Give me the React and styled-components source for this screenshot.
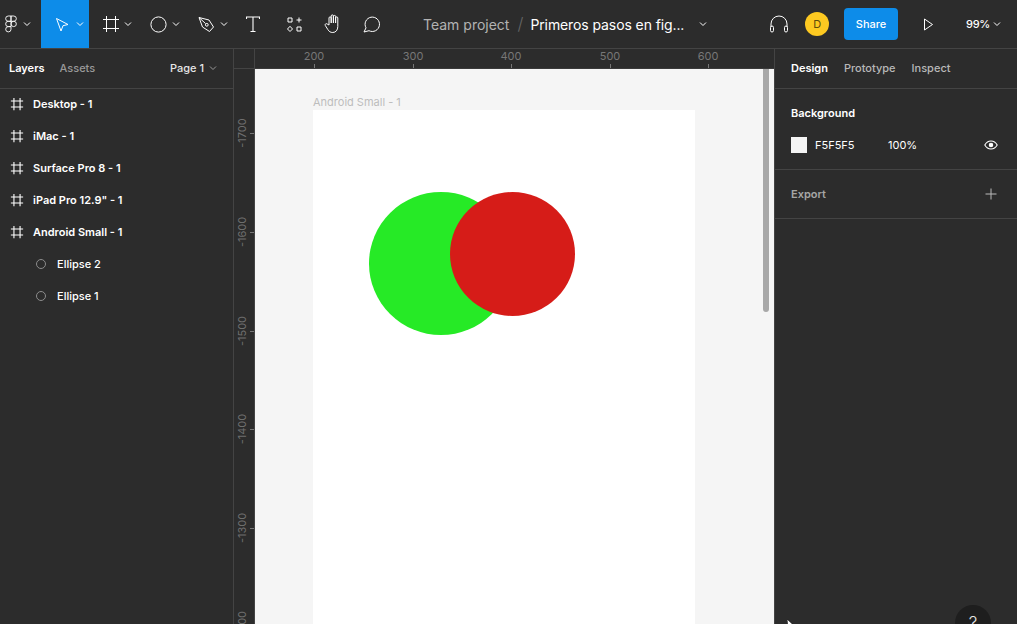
import React from 'react';
import styled, { createGlobalStyle } from 'styled-components';

const layers = ['Desktop - 1', 'iMac - 1', 'Surface Pro 8 - 1', 'iPad Pro 12.9" - 1', 'Android Small - 1'];
const shapes = ['Ellipse 2', 'Ellipse 1'];
const hTicks = [
  { label: '200', x: 59 },
  { label: '300', x: 158 },
  { label: '400', x: 256 },
  { label: '500', x: 355 },
  { label: '600', x: 453 },
];
const vTicks = [
  { label: '-1700', y: 64 },
  { label: '-1600', y: 163 },
  { label: '-1500', y: 262 },
  { label: '-1400', y: 360 },
  { label: '-1300', y: 459 },
  { label: '-1200', y: 557 },
];

const Chevron = ({ color = '#fff' }) => (
  <svg width='8' height='6' viewBox='0 0 8 6' fill='none' stroke={color} strokeWidth='1'>
    <path d='M1 1.5l3 3 3-3' />
  </svg>
);

const FrameIcon = ({ size = 14 }) => (
  <svg width={size} height={size} viewBox='0 0 16 16' fill='none' stroke='#fff' strokeWidth='1.25'>
    <path d='M4.5 1v14M11.5 1v14M1 4.5h14M1 11.5h14' />
  </svg>
);

const App = () => (
  <Page>
    <GlobalStyle />
    <Toolbar>
      <ToolGroup>
        <LogoTool>
          <svg width='14' height='18' viewBox='0 0 14 18' fill='none' stroke='#fff' strokeWidth='0.9'>
            <path d='M7 1H4.300a2.650 2.650 0 0 0 0 5.300H7zM7 1h2.700a2.650 2.650 0 0 1 0 5.300H7zM7 6.300H4.300a2.650 2.650 0 0 0 0 5.300H7zM7 11.600H4.300A2.650 2.650 0 1 0 7 14.250z' />
            <circle cx='9.700' cy='8.950' r='2.650' />
          </svg>
          <Chevron />
        </LogoTool>
        <MoveTool>
          <svg width='14' height='15' viewBox='0 0 14 15' fill='none' stroke='#fff' strokeWidth='1'>
            <path d='M1.500 1.500l11.500 6-5 1.200-2 5.300z' />
          </svg>
          <Chevron />
        </MoveTool>
        <Tool $gap={4}>
          <svg width='18' height='18' viewBox='0 0 18 18' fill='none' stroke='#fff' strokeWidth='1'>
            <path d='M4.500 1v16M13.500 1v16M1 4.500h16M1 13.500h16' />
          </svg>
          <Chevron />
        </Tool>
        <Tool>
          <svg width='17' height='17' viewBox='0 0 17 17' fill='none' stroke='#fff' strokeWidth='1'>
            <circle cx='8.500' cy='8.500' r='7.600' />
          </svg>
          <Chevron />
        </Tool>
        <Tool>
          <svg width='17' height='17' viewBox='0 0 17 17' fill='none' stroke='#fff' strokeWidth='1'>
            <path d='M1 1.500l10 2.500 4.500 7-4 4.500-7-4.500zM1 1.500l6.500 6' />
            <circle cx='8.800' cy='8.800' r='1.400' />
          </svg>
          <Chevron />
        </Tool>
        <SoloTool $w={54}>
          <svg width='14' height='16' viewBox='0 0 14 16' fill='none' stroke='#fff' strokeWidth='1.100'>
            <path d='M.5 3V1h13v2M7 1v14M4.500 15.500h5' />
          </svg>
        </SoloTool>
        <SoloTool $w={37} $flush>
          <svg width='15' height='15' viewBox='0 0 15 15' fill='none' stroke='#fff' strokeWidth='1'>
            <path d='M1 1h4v4H1zM10 10h4v4h-4zM3 9.300L5.500 12 3 14.500.5 12zM12 .5v5M9.500 3h5' />
          </svg>
        </SoloTool>
        <SoloTool $w={39} $flush>
          <svg width='18' height='20' viewBox='0 0 18 20' fill='none' stroke='#fff' strokeWidth='1'>
            <path d='M5 11V4a1.100 1.100 0 0 1 2.200 0v5-7a1.100 1.100 0 0 1 2.200 0v7-6.500a1.100 1.100 0 0 1 2.200 0V9 4a1.100 1.100 0 0 1 2.200 0v8.500c0 3.500-2 6-5 6-2.500 0-3.700-1-5-3L1.300 11.500c-.8-1.300 1-2.500 2-1.400z' />
          </svg>
        </SoloTool>
        <SoloTool $w={24} $flush>
          <svg width='18' height='18' viewBox='0 0 18 18' fill='none' stroke='#fff' strokeWidth='1'>
            <path d='M1 17l2-4.200A7.200 7.200 0 1 1 6 15.700z' />
          </svg>
        </SoloTool>
      </ToolGroup>

      <FileTitle>
        <Project>Team project</Project>
        <Slash>/</Slash>
        <FileName>Primeros pasos en fig...</FileName>
        <Chevron />
      </FileTitle>

      <Actions>
        <svg width='20' height='18' viewBox='0 0 20 18' fill='none' stroke='#fff' strokeWidth='1'>
          <path d='M2 12V9a8 8 0 0 1 16 0v3' />
          <rect x='1.500' y='11' width='3' height='6' rx='1.500' />
          <rect x='15.500' y='11' width='3' height='6' rx='1.500' />
        </svg>
        <Avatar>D</Avatar>
        <ShareButton>Share</ShareButton>
        <svg width='11' height='13' viewBox='0 0 11 13' fill='none' stroke='#fff' strokeWidth='1'>
          <path d='M1.500 1v11l8-5.500z' />
        </svg>
        <Zoom>
          99%
          <Chevron />
        </Zoom>
      </Actions>
    </Toolbar>

    <Workspace>
      <LeftPanel>
        <PanelTabs>
          <TabRow>
            <Tab $active>Layers</Tab>
            <Tab>Assets</Tab>
          </TabRow>
          <PagePicker>
            Page 1
            <Chevron color='#999' />
          </PagePicker>
        </PanelTabs>
        <LayerList>
          {layers.map(name => (
            <LayerRow key={name}>
              <FrameIcon />
              <LayerName>{name}</LayerName>
            </LayerRow>
          ))}
          {shapes.map(name => (
            <ShapeRow key={name}>
              <ShapeDot />
              <ShapeName>{name}</ShapeName>
            </ShapeRow>
          ))}
        </LayerList>
      </LeftPanel>

      <Stage>
        <Corner />
        <TopRuler>
          {hTicks.map(t => (
            <HTick key={t.label} style={{ left: t.x }}>{t.label}</HTick>
          ))}
        </TopRuler>
        <SideRuler>
          {vTicks.map(t => (
            <VTick key={t.label} style={{ top: t.y }}>
              <span>{t.label}</span>
            </VTick>
          ))}
        </SideRuler>
        <Canvas>
          <FrameLabel>Android Small - 1</FrameLabel>
          <Frame>
            <GreenCircle />
            <RedCircle />
          </Frame>
          <Scrollbar />
        </Canvas>
      </Stage>

      <RightPanel>
        <DesignTabs>
          <DesignTabRow>
            <Tab $active>Design</Tab>
            <Tab $soft>Prototype</Tab>
            <Tab $soft>Inspect</Tab>
          </DesignTabRow>
        </DesignTabs>
        <BackgroundSection>
          <SectionTitle>Background</SectionTitle>
          <FillRow>
            <Swatch />
            <FillHex>F5F5F5</FillHex>
            <FillOpacity>100%</FillOpacity>
            <EyeSlot>
              <svg width='14' height='10' viewBox='0 0 14 10' fill='none' stroke='#fff' strokeWidth='1.100'>
                <path d='M.8 5C2.300 2.300 4.500 1 7 1s4.700 1.300 6.200 4C11.700 7.700 9.500 9 7 9S2.300 7.700.8 5z' />
                <circle cx='7' cy='5' r='1.700' fill='#fff' />
              </svg>
            </EyeSlot>
          </FillRow>
        </BackgroundSection>
        <ExportSection>
          <ExportTitle>Export</ExportTitle>
          <svg width='12' height='12' viewBox='0 0 12 12' fill='none' stroke='#bbb' strokeWidth='1'>
            <path d='M6 .5v11M.5 6h11' />
          </svg>
        </ExportSection>
        <HelpButton>?</HelpButton>
        <Cursor>
          <svg width='8' height='10' viewBox='0 0 8 10'>
            <path d='M0 0l7 6.500H3.500L1 10z' fill='#fff' stroke='#000' strokeWidth='.6' />
          </svg>
        </Cursor>
      </RightPanel>
    </Workspace>
  </Page>
);

export default App;

const GlobalStyle = createGlobalStyle`
  html, body {
    margin: 0;
    height: 100%;
    overflow: hidden;
    background: #2c2c2c;
  }
`;

const Page = styled.div`
  width: 1017px;
  height: 624px;
  display: flex;
  flex-direction: column;
  overflow: hidden;
  background: #2c2c2c;
  color: #fff;
  font-family: Inter, 'Liberation Sans', sans-serif;
  font-size: 11px;
`;

const Toolbar = styled.header`
  flex: 0 0 49px;
  box-sizing: border-box;
  display: grid;
  grid-template-columns: 400px 1fr auto;
  align-items: center;
  border-bottom: 1px solid #444;
`;

const ToolGroup = styled.div`
  display: flex;
  align-items: center;
  height: 48px;
`;

const Tool = styled.div`
  width: 48px;
  height: 48px;
  box-sizing: border-box;
  padding-left: 13px;
  display: flex;
  align-items: center;
  gap: ${p => p.$gap || 5}px;
  flex-shrink: 0;
`;

const LogoTool = styled(Tool)`
  width: 41px;
  padding-left: 4px;
`;

const MoveTool = styled(Tool)`
  background: #0d8ce9;
  padding-left: 14px;
  gap: 7px;
`;

const SoloTool = styled(Tool)`
  width: ${p => p.$w}px;
  padding-left: ${p => (p.$flush ? 0 : 13)}px;
`;

const FileTitle = styled.div`
  display: flex;
  align-items: center;
  padding-left: 23px;
  font-size: 14px;
  white-space: nowrap;
`;

const Project = styled.span`
  color: #b3b3b3;
`;

const Slash = styled.span`
  margin: 0 7px 0 8px;
  color: #666;
  font-size: 17px;
  font-weight: 300;
`;

const FileName = styled.span`
  color: #fff;
  margin-right: 15px;
  letter-spacing: -0.1px;
`;

const Actions = styled.div`
  display: flex;
  align-items: center;
  padding-right: 16px;
`;

const Avatar = styled.div`
  width: 24px;
  height: 24px;
  margin: 0 15px 0 16px;
  border-radius: 50%;
  background: #fdc921;
  color: #5f4b0c;
  font-size: 11px;
  display: flex;
  align-items: center;
  justify-content: center;
`;

const ShareButton = styled.button`
  width: 54px;
  height: 32px;
  margin-right: 25px;
  border: none;
  border-radius: 4px;
  background: #0d8ce9;
  color: #fff;
  font: 500 11px Inter, 'Liberation Sans', sans-serif;
`;

const Zoom = styled.div`
  display: flex;
  align-items: center;
  gap: 3px;
  margin-left: 32px;
  font-size: 11px;
  font-weight: 500;
  letter-spacing: -0.3px;
`;

const Workspace = styled.div`
  flex: 1;
  min-height: 0;
  display: flex;
`;

const LeftPanel = styled.aside`
  flex: 0 0 234px;
  box-sizing: border-box;
  border-right: 1px solid #444;
`;

const PanelTabs = styled.div`
  height: 40px;
  box-sizing: border-box;
  display: flex;
  align-items: center;
  justify-content: space-between;
  padding: 0 16px 2px 9px;
  border-bottom: 1px solid #444;
`;

const DesignTabs = styled(PanelTabs)`
  padding-left: 16px;
`;

const TabRow = styled.div`
  display: flex;
  gap: 15px;
`;

const DesignTabRow = styled(TabRow)`
  gap: 16px;
`;

const Tab = styled.span`
  font-size: 11px;
  font-weight: ${p => (p.$active ? 600 : 500)};
  color: ${p => (p.$active ? '#fff' : p.$soft ? '#b8b8b8' : '#999')};
`;

const PagePicker = styled.div`
  display: flex;
  align-items: center;
  gap: 5px;
  font-weight: 500;
  color: #e6e6e6;
`;

const LayerList = styled.div`
  margin-top: -1px;
`;

const LayerRow = styled.div`
  height: 32px;
  display: flex;
  align-items: center;
  gap: 9px;
  padding-left: 10px;
`;

const LayerName = styled.span`
  font-size: 11px;
  font-weight: 600;
`;

const ShapeRow = styled(LayerRow)`
  gap: 11px;
  padding-left: 36px;
`;

const ShapeDot = styled.span`
  width: 8px;
  height: 8px;
  border: 1px solid #8c8c8c;
  border-radius: 50%;
`;

const ShapeName = styled.span`
  font-size: 11px;
  font-weight: 500;
`;

const Stage = styled.main`
  flex: 1;
  min-width: 0;
  display: grid;
  grid-template-columns: 21px 1fr;
  grid-template-rows: 20px 1fr;
`;

const Corner = styled.div`
  border-right: 1px solid #444;
  border-bottom: 1px solid #444;
`;

const TopRuler = styled.div`
  position: relative;
  background: #2c2c2c;
  border-bottom: 1px solid #3a3a3a;
`;

const HTick = styled.span`
  position: absolute;
  top: 0;
  width: 30px;
  margin-left: -15px;
  text-align: center;
  font-size: 11px;
  line-height: 14px;
  color: #777;

  &::after {
    content: '';
    position: absolute;
    left: 50%;
    bottom: -5px;
    height: 4px;
    width: 1px;
    background: #777;
  }
`;

const SideRuler = styled.div`
  position: relative;
  overflow: hidden;
  background: #2c2c2c;
  border-right: 1px solid #444;
`;

const VTick = styled.div`
  position: absolute;
  left: 0;
  right: 0;
  height: 1px;

  &::after {
    content: '';
    position: absolute;
    right: 0;
    top: 0;
    height: 1px;
    width: 4px;
    background: #777;
  }

  span {
    position: absolute;
    left: 8px;
    top: 0;
    font-size: 11px;
    line-height: 1;
    color: #6f6f6f;
    white-space: nowrap;
    transform: translate(-50%, -50%) rotate(-90deg);
  }
`;

const Canvas = styled.div`
  position: relative;
  overflow: hidden;
  background: #f5f5f5;
  padding: 26px 0 0 58px;
`;

const FrameLabel = styled.div`
  font-size: 11px;
  line-height: 14px;
  margin-bottom: 1px;
  color: #bdbdbd;
`;

const Frame = styled.div`
  position: relative;
  width: 382px;
  height: 600px;
  background: #fff;
`;

const GreenCircle = styled.div`
  position: absolute;
  left: 56px;
  top: 82px;
  width: 144px;
  height: 143px;
  border-radius: 50%;
  background: #26ea26;
`;

const RedCircle = styled.div`
  position: absolute;
  left: 137px;
  top: 82px;
  width: 125px;
  height: 124px;
  border-radius: 50%;
  background: #d61c18;
`;

const Scrollbar = styled.div`
  position: absolute;
  right: 5px;
  top: 0;
  width: 6px;
  height: 243px;
  border-radius: 0 0 3px 3px;
  background: #a8a8a8;
`;

const RightPanel = styled.aside`
  position: relative;
  flex: 0 0 243px;
  box-sizing: border-box;
  border-left: 1px solid #444;
  overflow: hidden;
`;

const BackgroundSection = styled.section`
  height: 81px;
  box-sizing: border-box;
  padding: 17px 16px 0;
  border-bottom: 1px solid #444;
`;

const SectionTitle = styled.div`
  font-size: 11px;
  line-height: 14px;
  font-weight: 600;
`;

const FillRow = styled.div`
  display: flex;
  align-items: center;
  margin-top: 17px;
`;

const Swatch = styled.div`
  width: 16px;
  height: 16px;
  background: #f5f5f5;
`;

const FillHex = styled.span`
  width: 73px;
  margin-left: 8px;
  font-size: 11px;
`;

const FillOpacity = styled.span`
  font-size: 11px;
`;

const EyeSlot = styled.span`
  display: flex;
  margin-left: auto;
  margin-right: 3px;
`;

const ExportSection = styled.section`
  height: 49px;
  box-sizing: border-box;
  display: flex;
  align-items: center;
  justify-content: space-between;
  padding: 0 20px 0 16px;
  border-bottom: 1px solid #444;
`;

const ExportTitle = styled.span`
  font-size: 11px;
  font-weight: 600;
  color: #a6a6a6;
`;

const HelpButton = styled.div`
  position: absolute;
  left: 180px;
  top: 556px;
  width: 36px;
  height: 36px;
  border-radius: 50%;
  background: #1e1e1e;
  color: #e6e6e6;
  font-size: 17px;
  font-weight: 300;
  display: flex;
  align-items: center;
  justify-content: center;
`;

const Cursor = styled.div`
  position: absolute;
  left: 12px;
  top: 570px;
  line-height: 0;
`;
